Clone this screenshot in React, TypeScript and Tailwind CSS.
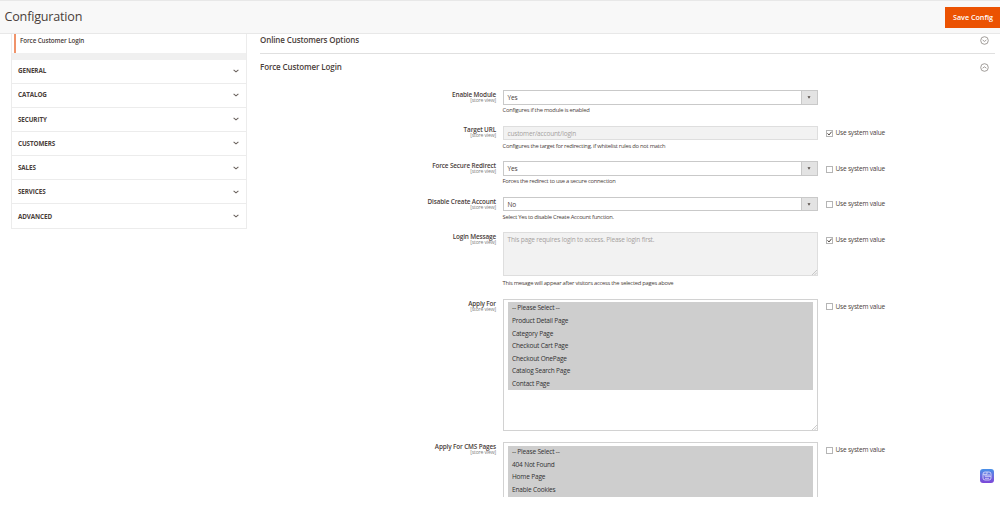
import React from "react";

type Field = {
  label: string;
  type: "select" | "text" | "textarea" | "multi";
  value?: string;
  options?: string[];
  note?: string;
  system?: boolean;
  height: string;
};

const sections = [
  "GENERAL",
  "CATALOG",
  "SECURITY",
  "CUSTOMERS",
  "SALES",
  "SERVICES",
  "ADVANCED",
];

const fields: Field[] = [
  {
    label: "Enable Module",
    type: "select",
    value: "Yes",
    note: "Configures if the module is enabled",
    height: "h-[35.6px]",
  },
  {
    label: "Target URL",
    type: "text",
    value: "customer/account/login",
    note: "Configures the target for redirecting, if whitelist rules do not match",
    system: true,
    height: "h-[35.6px]",
  },
  {
    label: "Force Secure Redirect",
    type: "select",
    value: "Yes",
    note: "Forces the redirect to use a secure connection",
    system: false,
    height: "h-[35.6px]",
  },
  {
    label: "Disable Create Account",
    type: "select",
    value: "No",
    note: "Select Yes to disable Create Account function.",
    system: false,
    height: "h-[35.6px]",
  },
  {
    label: "Login Message",
    type: "textarea",
    value: "This page requires login to access. Please login first.",
    note: "This mesage will appear after visitors access the selected pages above",
    system: true,
    height: "h-[66.6px]",
  },
  {
    label: "Apply For",
    type: "multi",
    options: [
      "-- Please Select --",
      "Product Detail Page",
      "Category Page",
      "Checkout Cart Page",
      "Checkout OnePage",
      "Catalog Search Page",
      "Contact Page",
    ],
    system: false,
    height: "h-[143.5px]",
  },
  {
    label: "Apply For CMS Pages",
    type: "multi",
    options: [
      "-- Please Select --",
      "404 Not Found",
      "Home Page",
      "Enable Cookies",
    ],
    system: false,
    height: "h-[143.5px]",
  },
];

const Chevron = () => (
  <svg className="w-[6px] h-[4px]" viewBox="0 0 6 4" fill="none">
    <path d="M0.6 0.8L3 2.8L5.4 0.8" stroke="#6a625d" strokeWidth="1.1" />
  </svg>
);

const Toggle = ({ open }: { open?: boolean }) => (
  <svg
    className="w-[9px] h-[9px]"
    viewBox="0 0 9 9"
    fill="none"
    stroke="#8a8582"
    strokeWidth="0.8"
  >
    <circle cx="4.5" cy="4.5" r="3.8" />
    <path d={open ? "M2.6 5.2L4.5 3.8L6.4 5.2" : "M2.6 4L4.5 5.4L6.4 4"} />
  </svg>
);

const Grip = () => (
  <svg
    className="absolute right-0 bottom-0 w-[5px] h-[5px]"
    viewBox="0 0 5 5"
    stroke="#aaa"
    strokeWidth="0.6"
  >
    <path d="M0 5L5 0M2.5 5L5 2.5" />
  </svg>
);

const Control = ({ field }: { field: Field }) => {
  if (field.type === "select") {
    return (
      <div className="flex h-[14.5px] border border-[#c9c9c9] bg-white">
        <span className="flex-1 pl-[4px] leading-[13.5px]">{field.value}</span>
        <span className="w-[16px] flex items-center justify-center bg-[#e3e3e3] border-l border-[#c9c9c9]">
          <svg className="w-[4px] h-[3px]" viewBox="0 0 4 3">
            <path d="M0.5 0.2H3.5L2 2.8Z" fill="#514943" />
          </svg>
        </span>
      </div>
    );
  }
  if (field.type === "text") {
    return (
      <div className="h-[14.5px] border border-[#dedede] bg-[#f2f2f2] pl-[4px] leading-[13.5px] text-[#a5a19e]">
        {field.value}
      </div>
    );
  }
  if (field.type === "textarea") {
    return (
      <div className="relative h-[44px] border border-[#dedede] bg-[#f2f2f2] pl-[4px] pt-px leading-[12px] text-[#a5a19e]">
        {field.value}
        <Grip />
      </div>
    );
  }
  const filled = field.label === "Apply For CMS Pages";
  return (
    <div className="relative h-[132px] border border-[#d2d2d2] bg-white pt-[2.5px] px-[4px]">
      <ul className={filled ? "bg-[#cecece] h-[126px]" : "bg-[#cecece]"}>
        {field.options?.map((option) => (
          <li
            key={option}
            className="h-[12.55px] pl-[4.5px] leading-[12.8px] text-[#303030]"
          >
            {option}
          </li>
        ))}
      </ul>
      <Grip />
    </div>
  );
};

const FieldRow = ({ field }: { field: Field }) => {
  return (
    <div className={`flex items-start shrink-0 ${field.height}`}>
      <div className="w-[236px] pt-[0.8px] text-right">
        <div className="font-semibold leading-[8px] text-[6.4px] tracking-[-0.14px]">
          {field.label}
        </div>
        <div className="text-[5.1px] leading-[3px] tracking-[-0.15px] text-[#808080]">
          [store view]
        </div>
      </div>
      <div className="ml-[6.5px] w-[315px] text-[6.5px] tracking-[-0.17px]">
        <Control field={field} />
        {field.note && (
          <p
            className={`text-[5.8px] leading-[8px] tracking-[-0.25px] ${
              field.type === "textarea" ? "mt-[2.8px]" : "mt-[1.5px]"
            }`}
          >
            {field.note}
          </p>
        )}
      </div>
      {field.system !== undefined && (
        <div className="ml-[8.5px] mt-[3px] flex items-center h-[9px] text-[6.5px] tracking-[-0.19px]">
          <span className="w-[7px] h-[7px] mt-px mr-[2.5px] border border-[#b5b5b5] bg-white flex items-center justify-center">
            {field.system && (
              <svg className="w-[5px] h-[5px]" viewBox="0 0 5 5" fill="none">
                <path d="M0.5 2.3L2 4L4.6 0.7" stroke="#514943" />
              </svg>
            )}
          </span>
          Use system value
        </div>
      )}
    </div>
  );
};

const Sidebar = () => {
  return (
    <nav className="ml-[11px] w-[236px] h-[194.5px] border-x border-b border-[#ececec]">
      <div className="h-[19px] ml-[2px] border-l-2 border-[#f0936a] pl-[4px] pt-[1.2px] text-[6.3px] leading-[11px] tracking-[-0.1px] font-semibold">
        Force Customer Login
      </div>
      <div className="h-[6.5px] bg-[#f0f0f0]" />
      {sections.map((section) => (
        <div
          key={section}
          className="h-[24.15px] pl-[6px] pr-[7px] flex items-center justify-between border-b border-[#ececec] last:border-b-0 text-[6.3px] tracking-[-0.1px] font-bold"
        >
          {section}
          <Chevron />
        </div>
      ))}
    </nav>
  );
};

const App = () => {
  return (
    <div className="h-[509px] bg-white text-[#4a403a] font-['Open_Sans',sans-serif] overflow-hidden">
      <div className="relative h-[497px] overflow-hidden">
        <header className="h-[34px] flex items-center justify-between bg-[#f8f8f8] border-y border-[#e8e8e8] pl-[4.5px]">
          <h1 className="text-[12.6px] leading-[18px] tracking-[-0.2px]">
            Configuration
          </h1>
          <button className="w-[55px] h-[21px] pl-[1px] bg-[#eb5202] text-white text-[7.2px] font-semibold">
            Save Config
          </button>
        </header>
        <div className="flex items-start">
          <Sidebar />
          <main className="ml-[13px] w-[735px]">
            <div className="h-[20px] flex items-start justify-between border-b border-[#e0e0e0] pr-[6px]">
              <h2 className="text-[8px] leading-[12px] tracking-[-0.12px] font-semibold">
                Online Customers Options
              </h2>
              <div className="mt-[2px]">
                <Toggle />
              </div>
            </div>
            <div className="h-[36px] pt-[7px] flex items-start justify-between pr-[6px]">
              <h2 className="text-[8px] leading-[12px] tracking-[-0.12px] font-semibold">
                Force Customer Login
              </h2>
              <div className="mt-[2px]">
                <Toggle open />
              </div>
            </div>
            <div className="flex flex-col">
              {fields.map((field) => (
                <FieldRow key={field.label} field={field} />
              ))}
            </div>
          </main>
        </div>
        <button className="absolute left-[980px] top-[469px] w-[14px] h-[14px] rounded-[3px] bg-linear-to-b from-[#4590e8] to-[#7b45d8] flex items-center justify-center">
          <svg
            className="w-[10px] h-[10px]"
            viewBox="0 0 10 10"
            fill="none"
            stroke="#e3e0fb"
            strokeWidth="0.8"
          >
            <rect x="1" y="1" width="8" height="8" rx="2" />
            <path d="M1 3.3H5M5 1V5.3M5 5.3H9M3 3.3V5.3H5M7 3V5.3M3 7.3H7" />
          </svg>
        </button>
      </div>
    </div>
  );
};

export default App;
